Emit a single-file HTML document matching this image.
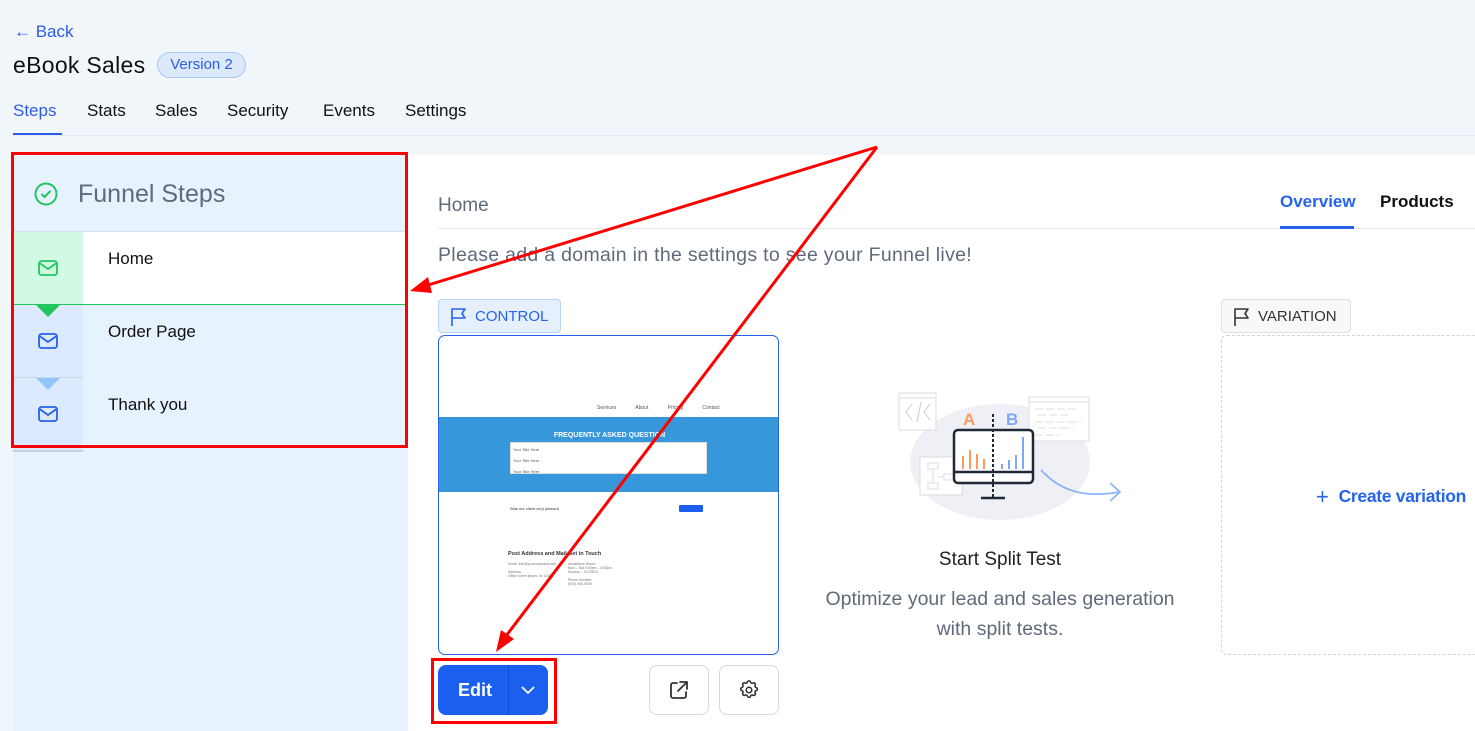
<!DOCTYPE html>
<html><head><meta charset="utf-8"><style>
*{box-sizing:border-box;margin:0;padding:0}
body{width:1475px;height:731px;overflow:hidden;background:#f1f6fa;font-family:"Liberation Sans",sans-serif;position:relative;color:#111}
.a{position:absolute;white-space:nowrap}
.mail{position:absolute;left:37px;width:22px;height:18px}
</style></head><body>
<div class="a" style="left:14px;top:22px;font-size:17px;color:#2b5ce6">&#8592; Back</div>
<div class="a" style="left:13px;top:52px;font-size:23px;color:#111;letter-spacing:0.3px">eBook Sales</div>
<div class="a" style="left:157px;top:52px;width:89px;height:26px;border:1px solid #a9c9f5;background:#dbe9fb;border-radius:13px;color:#2b5ce6;font-size:15px;line-height:24px;text-align:center">Version 2</div>
<div class="a" style="left:13px;top:101px;font-size:17px;color:#2b5ce6">Steps</div>
<div class="a" style="left:87px;top:101px;font-size:17px">Stats</div>
<div class="a" style="left:155px;top:101px;font-size:17px">Sales</div>
<div class="a" style="left:227px;top:101px;font-size:17px">Security</div>
<div class="a" style="left:323px;top:101px;font-size:17px">Events</div>
<div class="a" style="left:405px;top:101px;font-size:17px">Settings</div>
<div class="a" style="left:13px;top:135px;width:1462px;height:1px;background:#e5eaf0"></div>
<div class="a" style="left:13px;top:133px;width:49px;height:2px;background:#2b5ce6"></div>

<div class="a" style="left:13px;top:155px;width:395px;height:576px;background:#e6f2fe"></div>
<svg class="a" style="left:33px;top:181px" width="26" height="26" viewBox="0 0 26 26"><circle cx="13" cy="13" r="10.5" fill="none" stroke="#22c55e" stroke-width="2"/><path d="M8.5 13l3 3 6-6" fill="none" stroke="#22c55e" stroke-width="2"/></svg>
<div class="a" style="left:78px;top:180px;font-size:25px;color:#5f6b7a">Funnel Steps</div>
<div class="a" style="left:13px;top:231px;width:395px;height:1px;background:#d8e1ea"></div>
<div class="a" style="left:13px;top:232px;width:395px;height:72px;background:#fff"></div>
<div class="a" style="left:13px;top:232px;width:70px;height:72px;background:#d1fae5"></div>
<div class="a" style="left:13px;top:304px;width:395px;height:1px;background:#22c55e"></div>
<div class="a" style="left:13px;top:305px;width:70px;height:145px;background:#dbeafe"></div>
<div class="a" style="left:13px;top:377px;width:70px;height:1px;background:#c9d6e4"></div>
<div class="a" style="left:13px;top:450px;width:70px;height:2px;background:#c9d3de"></div>
<svg class="a" style="left:36px;top:305px" width="24" height="12"><path d="M0 0h24L12 12z" fill="#22c55e"/></svg>
<svg class="a" style="left:36px;top:378px" width="24" height="12"><path d="M0 0h24L12 12z" fill="#93c5fd"/></svg>
<svg class="mail" style="top:259px" viewBox="0 0 22 18"><rect x="2" y="2" width="18" height="14" rx="2.5" fill="none" stroke="#22c55e" stroke-width="1.8"/><path d="M2.5 4l8.5 6 8.5-6" fill="none" stroke="#22c55e" stroke-width="1.8"/></svg>
<svg class="mail" style="top:332px" viewBox="0 0 22 18"><rect x="2" y="2" width="18" height="14" rx="2.5" fill="none" stroke="#2563eb" stroke-width="1.8"/><path d="M2.5 4l8.5 6 8.5-6" fill="none" stroke="#2563eb" stroke-width="1.8"/></svg>
<svg class="mail" style="top:405px" viewBox="0 0 22 18"><rect x="2" y="2" width="18" height="14" rx="2.5" fill="none" stroke="#2563eb" stroke-width="1.8"/><path d="M2.5 4l8.5 6 8.5-6" fill="none" stroke="#2563eb" stroke-width="1.8"/></svg>
<div class="a" style="left:108px;top:249px;font-size:17px">Home</div>
<div class="a" style="left:108px;top:322px;font-size:17px">Order Page</div>
<div class="a" style="left:108px;top:395px;font-size:17px">Thank you</div>

<div class="a" style="left:408px;top:155px;width:1067px;height:576px;background:#fff"></div>
<div class="a" style="left:438px;top:195px;font-size:19px;color:#5f6b7a">Home</div>
<div class="a" style="left:1280px;top:192px;font-size:17px;color:#2563eb;font-weight:bold">Overview</div>
<div class="a" style="left:1380px;top:192px;font-size:17px;color:#111;font-weight:bold">Products</div>
<div class="a" style="left:438px;top:228px;width:1037px;height:1px;background:#e5e8ec"></div>
<div class="a" style="left:1280px;top:226px;width:74px;height:3px;background:#2563eb"></div>
<div class="a" style="left:438px;top:244px;font-size:19.5px;letter-spacing:0.3px;color:#5f6b7a">Please add a domain in the settings to see your Funnel live!</div>

<div class="a" style="left:438px;top:299px;width:123px;height:34px;border:1px solid #b9d3f5;background:#e6f0fc;border-radius:4px"></div>
<svg class="a" style="left:450px;top:307px" width="18" height="20" viewBox="0 0 18 20"><path d="M2 19V2h13l-3 4.5 3 4.5H2" fill="none" stroke="#2563eb" stroke-width="1.6" stroke-linejoin="round"/></svg>
<div class="a" style="left:475px;top:308px;font-size:15px;color:#2563eb">CONTROL</div>

<div class="a" style="left:438px;top:335px;width:341px;height:320px;border:1px solid #2563eb;border-radius:7px;background:#fff;overflow:hidden">
 <div class="a" style="left:158px;top:69px;font-size:5px;color:#555;word-spacing:18px">Services About Pricing Contact</div>
 <div class="a" style="left:0;top:81px;width:341px;height:75px;background:#3797db"></div>
 <div class="a" style="left:0;top:96px;width:341px;text-align:center;font-size:7px;color:#fff;font-weight:bold">FREQUENTLY ASKED QUESTION</div>
 <div class="a" style="left:71px;top:106px;width:197px;height:32px;background:#fff;border:1px solid #ddd"></div>
 <div class="a" style="left:74px;top:108px;font-size:4px;color:#555;line-height:11px">Your Title Here<br>Your Title Here<br>Your Title Here</div>
 <div class="a" style="left:71px;top:170px;font-size:4px;color:#333">Was our client very pleased</div>
 <div class="a" style="left:240px;top:169px;width:24px;height:7px;background:#1a5ff0;border-radius:1px"></div>
 <div class="a" style="left:69px;top:215px;font-size:5.5px;color:#333;font-weight:bold">Post Address and Mail</div>
 <div class="a" style="left:129px;top:215px;font-size:5.5px;color:#333;font-weight:bold">Get in Touch</div>
 <div class="a" style="left:69px;top:226px;font-size:3.5px;color:#777;line-height:4px">Email: info@yourcompany.com<br><br>Address<br>Office lorem ipsum, #c 1200</div>
 <div class="a" style="left:129px;top:226px;font-size:3.5px;color:#777;line-height:4px">Assistance Hours<br>Mon – Sat 9:00am – 8:00pm<br>Sunday – CLOSED<br><br>Phone Number<br>(000) 000-0000</div>
</div>

<div class="a" style="left:438px;top:665px;width:110px;height:50px;background:#1a5ff0;border-radius:8px"></div>
<div class="a" style="left:508px;top:665px;width:1px;height:50px;background:#0f4ccc"></div>
<div class="a" style="left:458px;top:680px;font-size:18px;color:#fff;font-weight:bold">Edit</div>
<svg class="a" style="left:520px;top:684px" width="16" height="12"><path d="M2 3l6 6 6-6" fill="none" stroke="#fff" stroke-width="1.8"/></svg>
<div class="a" style="left:649px;top:665px;width:60px;height:50px;border:1px solid #d4d9e0;border-radius:8px;background:#fff"></div>
<svg class="a" style="left:668px;top:679px" width="22" height="22" viewBox="0 0 22 22"><path d="M9 4H5a2 2 0 0 0-2 2v11a2 2 0 0 0 2 2h11a2 2 0 0 0 2-2v-4M12 3h7v7M19 3l-9 9" fill="none" stroke="#333" stroke-width="1.8" stroke-linecap="round" stroke-linejoin="round"/></svg>
<div class="a" style="left:719px;top:665px;width:60px;height:50px;border:1px solid #d4d9e0;border-radius:8px;background:#fff"></div>
<svg class="a" style="left:738px;top:679px" width="22" height="22" viewBox="0 0 24 24"><path d="M10.3 3.3c.4-1.7 3-1.7 3.4 0a1.7 1.7 0 0 0 2.6 1.1c1.5-.9 3.3.8 2.4 2.4a1.7 1.7 0 0 0 1 2.5c1.8.4 1.8 3 0 3.4a1.7 1.7 0 0 0-1 2.6c.9 1.5-.9 3.3-2.4 2.4a1.7 1.7 0 0 0-2.6 1c-.4 1.8-3 1.8-3.4 0a1.7 1.7 0 0 0-2.6-1c-1.5.9-3.3-.9-2.4-2.4a1.7 1.7 0 0 0-1-2.6c-1.8-.4-1.8-3 0-3.4a1.7 1.7 0 0 0 1-2.5C4.4 5.2 6.2 3.4 7.7 4.4a1.7 1.7 0 0 0 2.6-1.1z" fill="none" stroke="#333" stroke-width="1.7"/><circle cx="12" cy="12" r="3" fill="none" stroke="#333" stroke-width="1.7"/></svg>

<svg class="a" style="left:880px;top:380px" width="260" height="150" viewBox="0 0 260 150">
 <ellipse cx="120" cy="82" rx="90" ry="58" fill="#eef0f5"/>
 <rect x="19" y="13" width="37" height="37" fill="#fff" stroke="#ddd"/><line x1="19" y1="18" x2="56" y2="18" stroke="#ddd"/>
 <path d="M32 24l-6 8 6 8M50 24l-6 8 6 8M41 22l-4 20" fill="none" stroke="#ccc"/>
 <rect x="149" y="17" width="60" height="44" fill="#fff" stroke="#ddd"/><line x1="149" y1="22" x2="209" y2="22" stroke="#ddd"/>
 <path d="M155 29h44M158 35h30M155 42h46M158 48h35M155 55h25" stroke="#ddd" stroke-dasharray="8 3"/>
 <rect x="40" y="77" width="42" height="38" fill="#fff" stroke="#ddd"/>
 <path d="M48 83h10v6H48zM48 103h10v6H48zM64 94h10v6H64zM53 89v14M58 97h6" fill="none" stroke="#ddd"/>
 <text x="83" y="45" font-family="Liberation Sans" font-weight="bold" font-size="17" fill="#fb9a5c">A</text>
 <text x="126" y="45" font-family="Liberation Sans" font-weight="bold" font-size="17" fill="#7fa8f5">B</text>
 <rect x="74" y="50" width="79" height="53" rx="4" fill="#fff" stroke="#1f2937" stroke-width="2.5"/>
 <line x1="74" y1="92" x2="153" y2="92" stroke="#1f2937" stroke-width="2.5"/>
 <line x1="113" y1="34" x2="113" y2="117" stroke="#1f2937" stroke-width="2" stroke-dasharray="3 2"/>
 <line x1="101" y1="118" x2="125" y2="118" stroke="#1f2937" stroke-width="2.5"/>
 <path d="M83 89v-13M90 89v-19M97 89v-15M104 89v-10" stroke="#fb9a5c" stroke-width="2"/>
 <path d="M122 89v-5M129 89v-9M136 89v-14M143 89v-32" stroke="#7fa8f5" stroke-width="2"/>
 <path d="M161 90c20 22 45 28 78 22M230 103l10 9-10 9" fill="none" stroke="#8db4f5" stroke-width="1.8"/>
</svg>
<div class="a" style="left:800px;top:549px;width:400px;text-align:center;font-size:19px;color:#222">Start Split Test</div>
<div class="a" style="left:800px;top:584px;width:400px;text-align:center;font-size:19.5px;color:#5f6b7a;line-height:30px">Optimize your lead and sales generation<br>with split tests.</div>

<div class="a" style="left:1221px;top:299px;width:130px;height:34px;border:1px solid #dde1e6;background:#f7f8fa;border-radius:4px"></div>
<svg class="a" style="left:1233px;top:307px" width="18" height="20" viewBox="0 0 18 20"><path d="M2 19V2h13l-3 4.5 3 4.5H2" fill="none" stroke="#333" stroke-width="1.6" stroke-linejoin="round"/></svg>
<div class="a" style="left:1258px;top:308px;font-size:15px;color:#333">VARIATION</div>
<div class="a" style="left:1221px;top:335px;width:270px;height:320px;border:1px dashed #cfd5dc;border-radius:6px"></div>
<div class="a" style="left:1316px;top:484px;font-size:17.5px;color:#2563eb;font-weight:bold;letter-spacing:-0.3px"><span style="font-size:22px;font-weight:300;margin-right:10px;vertical-align:-2px">+</span>Create variation</div>

<svg class="a" style="left:0;top:0" width="1475" height="731">
 <rect x="12.5" y="153.5" width="394" height="293" fill="none" stroke="#f00" stroke-width="3"/>
 <rect x="432.5" y="659.5" width="123" height="63" fill="none" stroke="#f00" stroke-width="3"/>
 <line x1="877" y1="147" x2="425" y2="286" stroke="#f00" stroke-width="3"/>
 <path d="M410 291l18-14 4 16z" fill="#f00"/>
 <line x1="877" y1="147" x2="506" y2="636" stroke="#f00" stroke-width="3"/>
 <path d="M496 652l5-22 13 9z" fill="#f00"/>
</svg>
</body></html>
